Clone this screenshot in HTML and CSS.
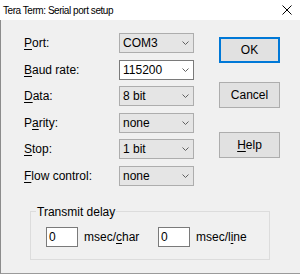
FILE: index.html
```html
<!DOCTYPE html>
<html lang="en">
<head>
  <meta charset="utf-8" />
  <title>Tera Term: Serial port setup</title>
  <link rel="stylesheet" href="styles.css">
</head>
<body>
  <div class="window">
    <div class="titlebar">
      <span class="title">Tera Term: Serial port setup</span>
      <svg class="close" width="10" height="10" viewBox="0 0 10 10">
        <path d="M0.5 0.5 L9.5 9.5 M9.5 0.5 L0.5 9.5" stroke="#000" stroke-width="1" fill="none" />
      </svg>
    </div>

    <div class="dialog">
      <div class="main">
        <div class="form">
          <label><u>P</u>ort:</label>
          <div class="combo">COM3<svg class="chev" width="7" height="4" viewBox="0 0 7 4"><path d="M0.5 0.5 L3.5 3.5 L6.5 0.5" /></svg></div>

          <label><u>B</u>aud rate:</label>
          <div class="combo editable">115200<svg class="chev" width="7" height="4" viewBox="0 0 7 4"><path d="M0.5 0.5 L3.5 3.5 L6.5 0.5" /></svg></div>

          <label><u>D</u>ata:</label>
          <div class="combo">8 bit<svg class="chev" width="7" height="4" viewBox="0 0 7 4"><path d="M0.5 0.5 L3.5 3.5 L6.5 0.5" /></svg></div>

          <label>P<u>a</u>rity:</label>
          <div class="combo">none<svg class="chev" width="7" height="4" viewBox="0 0 7 4"><path d="M0.5 0.5 L3.5 3.5 L6.5 0.5" /></svg></div>

          <label><u>S</u>top:</label>
          <div class="combo">1 bit<svg class="chev" width="7" height="4" viewBox="0 0 7 4"><path d="M0.5 0.5 L3.5 3.5 L6.5 0.5" /></svg></div>

          <label><u>F</u>low control:</label>
          <div class="combo">none<svg class="chev" width="7" height="4" viewBox="0 0 7 4"><path d="M0.5 0.5 L3.5 3.5 L6.5 0.5" /></svg></div>
        </div>

        <div class="buttons">
          <button class="btn default">OK</button>
          <button class="btn cancel">Cancel</button>
          <button class="btn help"><u>H</u>elp</button>
        </div>
      </div>

      <fieldset class="delay">
        <legend>Transmit delay</legend>
        <div class="delay-row">
          <div class="field">0</div>
          <span>msec/<u>c</u>har</span>
          <div class="field">0</div>
          <span>msec/l<u>i</u>ne</span>
        </div>
      </fieldset>
    </div>
  </div>
</body>
</html>
```

FILE: styles.css
```css
body {
  margin: 0;
  background-color: #fff;
  font-family: "Liberation Sans", Arial, sans-serif;
  font-size: 12px;
  color: #000;
}
.window {
  width: 300px;
  height: 275px;
  overflow: hidden;
}
.titlebar {
  height: 20px;
  background-color: #fff;
  display: flex;
  align-items: center;
  justify-content: space-between;
  padding: 0 8px 0 3px;
}
.title {
  font-size: 10px;
  letter-spacing: -0.45px;
}
.close {
  display: block;
}
.dialog {
  background-color: #f0f0f0;
  border-left: 1px solid #8c8c8c;
  border-bottom: 1px solid #9a9a9a;
  box-sizing: border-box;
  height: 254px;
}
.main {
  display: flex;
  padding: 13px 0 0 23px;
}
.form {
  display: grid;
  grid-template-columns: 95px 75px;
  grid-auto-rows: 20px;
  row-gap: 6.6px;
  align-items: center;
}
.form u,
.btn u,
.delay u {
  text-underline-offset: 2px;
}
.combo {
  height: 20px;
  box-sizing: border-box;
  border: 1px solid #adadad;
  background-color: #e5e5e5;
  display: flex;
  align-items: center;
  justify-content: space-between;
  padding: 0 4px 0 3px;
}
.combo.editable {
  background-color: #fff;
  border-color: #7a7a7a;
}
.chev path {
  fill: none;
  stroke: #606060;
  stroke-width: 1;
}
.buttons {
  display: flex;
  flex-direction: column;
  margin-left: 25px;
  padding-top: 4px;
}
.btn {
  width: 61px;
  height: 26px;
  box-sizing: border-box;
  background-color: #e1e1e1;
  border: 1px solid #adadad;
  font-family: inherit;
  font-size: 12px;
  color: #000;
  padding: 0;
}
.btn.default {
  border: 2px solid #0078d7;
}
.btn.cancel {
  margin-top: 19px;
}
.btn.help {
  margin-top: 24px;
}
.delay {
  margin: 19px 0 0 29px;
  width: 240px;
  box-sizing: border-box;
  border: 1px solid #dcdcdc;
  padding: 8px 0 12px 15px;
}
.delay legend {
  padding: 0 1px;
  margin-left: -10px;
  line-height: 14px;
}
.delay-row {
  display: grid;
  grid-template-columns: 32px 68px 32px auto;
  column-gap: 6px;
  align-items: center;
}
.field {
  height: 20px;
  box-sizing: border-box;
  border: 1px solid #7a7a7a;
  background-color: #fff;
  padding: 2px 2px;
  line-height: 14px;
}
```
